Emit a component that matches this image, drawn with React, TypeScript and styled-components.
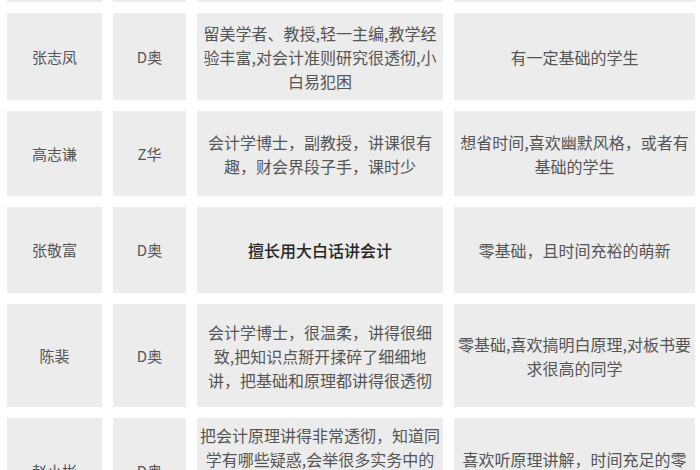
import styled, { createGlobalStyle } from 'styled-components';

type Row = {
	name: string;
	code: string;
	style: string[];
	fit: string[];
	height: number;
	strong?: boolean;
};

const rows: Row[] = [
	{ name: '', code: '', style: [], fit: [], height: 86 },
	{
		name: '张志凤',
		code: 'D奥',
		style: ['留美学者、教授,轻一主编,教学经', '验丰富,对会计准则研究很透彻,小', '白易犯困'],
		fit: ['有一定基础的学生'],
		height: 87,
	},
	{
		name: '高志谦',
		code: 'Z华',
		style: ['会计学博士，副教授，讲课很有', '趣，财会界段子手，课时少'],
		fit: ['想省时间,喜欢幽默风格，或者有', '基础的学生'],
		height: 85,
	},
	{
		name: '张敬富',
		code: 'D奥',
		style: ['擅长用大白话讲会计'],
		fit: ['零基础，且时间充裕的萌新'],
		height: 86,
		strong: true,
	},
	{
		name: '陈裴',
		code: 'D奥',
		style: ['会计学博士，很温柔，讲得很细', '致,把知识点掰开揉碎了细细地', '讲，把基础和原理都讲得很透彻'],
		fit: ['零基础,喜欢搞明白原理,对板书要', '求很高的同学'],
		height: 103,
	},
	{
		name: '赵小彬',
		code: 'D奥',
		style: ['把会计原理讲得非常透彻，知道同', '学有哪些疑惑,会举很多实务中的', '例子，讲得通俗易懂，帮助同学', '理解和记忆'],
		fit: ['喜欢听原理讲解，时间充足的零', '基础'],
		height: 106,
	},
];

const GlobalStyle = createGlobalStyle`
	html, body {
		margin: 0;
		padding: 0;
		background: #ffffff;
	}

	body {
		font-family: "Noto Sans CJK SC", "Noto Sans", sans-serif;
	}
`;

const Page = styled.div`
	width: 700px;
	height: 470px;
	overflow: hidden;
	background: #ffffff;
`;

const Table = styled.div`
	display: flex;
	flex-direction: column;
	gap: 11px;
	margin-top: -84px;
	padding-left: 7px;
`;

const TableRow = styled.div<{ $height: number }>`
	display: grid;
	grid-template-columns: 95px 73px 246px 241px;
	column-gap: 11px;
	height: ${(p) => p.$height}px;
`;

const Cell = styled.div<{ $strong?: boolean; $small?: boolean }>`
	display: flex;
	flex-direction: column;
	align-items: center;
	justify-content: center;
	background: #ececec;
	color: ${(p) => (p.$strong ? '#262626' : '#555555')};
	font-size: ${(p) => (p.$small ? '15px' : '16px')};
	font-weight: ${(p) => (p.$strong ? 500 : 400)};
	line-height: 24px;
	text-align: center;
	overflow: hidden;
`;

const Line = styled.span`
	display: block;
	white-space: nowrap;
`;

const Lines = ({ lines }: { lines: string[] }) => (
	<>
		{lines.map((line, i) => (
			<Line key={i}>{line}</Line>
		))}
	</>
);

export default function App() {
	return (
		<Page>
			<GlobalStyle />
			<Table>
				{rows.map((row, i) => (
					<TableRow key={i} $height={row.height}>
						<Cell $small>{row.name}</Cell>
						<Cell $small>{row.code}</Cell>
						<Cell $strong={row.strong}>
							<Lines lines={row.style} />
						</Cell>
						<Cell>
							<Lines lines={row.fit} />
						</Cell>
					</TableRow>
				))}
			</Table>
		</Page>
	);
}
